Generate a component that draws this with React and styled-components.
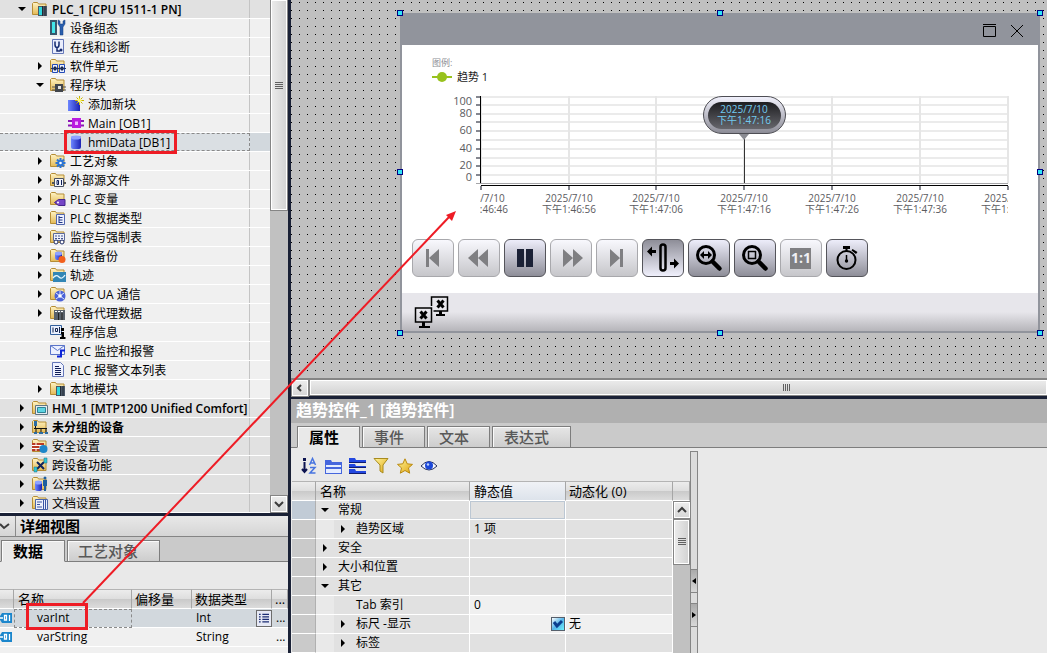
import React from 'react'
import styled, { createGlobalStyle, css } from 'styled-components'

const uiFont = '"Open Sans", "Noto Sans CJK SC", sans-serif'
const navy = '#1a2136'

const GlobalStyle = createGlobalStyle`
  * {
    box-sizing: border-box;
  }
  body {
    margin: 0;
    background: ${navy};
    font: 12px/18px ${uiFont};
    color: #000;
    overflow: hidden;
  }
  button {
    font: inherit;
    color: inherit;
    padding: 0;
    border: 0;
    background: none;
  }
  ul {
    list-style: none;
    margin: 0;
    padding: 0;
  }
  svg {
    display: block;
    flex: none;
  }
`

const Page = styled.div`
  position: relative;
  display: flex;
  gap: 3px;
  height: 100vh;
  overflow: hidden;
`

const LeftPane = styled.aside`
  display: flex;
  flex-direction: column;
  gap: 3px;
  width: 288px;
  flex: none;
`

const RightPane = styled.main`
  display: flex;
  flex-direction: column;
  gap: 3px;
  flex: 1;
  min-width: 0;
`

/* ---- project tree ---- */

const TreePanel = styled.section`
  display: flex;
`

const TreeList = styled.ul`
  flex: 1;
  background: #fff;
`

const TreeRow = styled.li`
  display: flex;
  height: 19px;
  border-bottom: 1px solid #fff;
  background: ${p => (p.$selected ? '#d2d8dd' : p.$level ? '#f0f0f0' : '#e1e1e1')};
`

const TreeCell = styled.div`
  display: flex;
  align-items: center;
  flex: 1;
  padding-left: ${p => 16 + p.$level * 18}px;
  border-right: 1px solid #c4c4c4;
  font-weight: ${p => (p.$bold ? 600 : 400)};
  white-space: nowrap;
  ${p =>
    p.$selected &&
    css`
      background: #dadfe3;
      border: 1px dashed #8a8a8a;
      border-left: 0;
    `}
`

const StatusCell = styled.div`
  width: 20px;
`

const Toggle = styled.button`
  display: flex;
  align-items: center;
  width: 16px;
  height: 16px;
  padding-left: 1px;
`

const TreeLabel = styled.span`
  margin-left: 4px;
  padding-top: 2px;
`

/* ---- scroll bars ---- */

const ScrollColumn = styled.div`
  display: flex;
  flex-direction: column;
  width: ${p => p.$width}px;
  flex: ${p => (p.$fill ? 1 : 'none')};
  background: #c1c1c1;
`

const Thumb = styled.div`
  display: flex;
  align-items: center;
  justify-content: center;
  height: ${p => p.$height}px;
  border: 1px solid #858585;
  box-shadow: inset 0 0 0 1px #fff;
  background: linear-gradient(to right, #ececec, #d2d2d2);
`

/* The list is scrolled down a little, so the thumb's upper end is out of view */
const TreeThumb = styled(Thumb)`
  border-top: 0;
  padding-bottom: 38px;
`

const ScrollButton = styled.button`
  display: flex;
  align-items: center;
  justify-content: center;
  width: 18px;
  height: 18px;
  margin-top: ${p => (p.$end ? 'auto' : 0)};
  border: 1px solid #858585;
  box-shadow: inset 0 0 0 1px #fff;
  background: linear-gradient(#ededed, #d6d6d6);
`

const ScrollRow = styled.div`
  display: flex;
  height: 18px;
  border-top: 1px solid #858585;
`

const WideThumb = styled(Thumb)`
  flex: 1;
  height: 17px;
  justify-content: flex-start;
  padding-left: 62.5%;
  border-right: 0;
  background: linear-gradient(#ececec, #d2d2d2);
`

/* ---- tabs ---- */

const TabStrip = styled.div`
  display: flex;
  align-items: flex-end;
  gap: 2px;
  height: 25px;
  padding-left: ${p => p.$indent}px;
  background: linear-gradient(to top, #7d7d7d 1px, #cacaca 1px);
`

const Tab = styled.button`
  height: 22px;
  width: ${p => p.$width}px;
  padding-left: ${p => p.$inset}px;
  border: 1px solid #7d7d7d;
  border-bottom-color: ${p => (p.$active ? '#e9e9e9' : '#7d7d7d')};
  box-shadow: inset 1px 1px 0 #fafafa;
  background: ${p => (p.$active ? '#e9e9e9' : 'linear-gradient(#e6e6e6, #cdcdcd)')};
  color: ${p => (p.$active ? '#000' : '#585858')};
  font-size: 15px;
  font-weight: ${p => (p.$active ? 700 : 500)};
  line-height: 18px;
  text-align: left;
`

/* ---- detail view ---- */

const DetailPanel = styled.section`
  flex: 1;
  background: #f0f0f0;
`

const DetailTitle = styled.header`
  display: flex;
  align-items: center;
  height: 21px;
  border-bottom: 1px solid #858585;
  background: linear-gradient(#e8e8e8, #d5d5d5);
`

const CollapseButton = styled.button`
  display: flex;
  align-items: center;
  width: 16px;
  height: 20px;
  border-right: 1px solid #8a8a8a;
`

const DetailHeading = styled.h2`
  margin: 0 0 0 4px;
  font-size: 15px;
  line-height: 20px;
  font-weight: 700;
`

const Spacer = styled.div`
  height: 27px;
  background: #e9e9e9;
`

const Table = styled.table`
  table-layout: fixed;
  width: ${p => p.$width};
  border-collapse: separate;
  border-spacing: 0;
`

const headStyle = css`
  height: 20px;
  border-top: 1px solid #b4b4b4;
  border-bottom: 1px solid #fff;
  border-right: 1px solid #a6a6a6;
  background: linear-gradient(#ececec, #dedede 50%, #c9c9c9 50%, #dcdcdc);
`

const HeadCell = styled.th`
  ${headStyle}
  padding: 0 0 0 ${p => p.$inset || 3}px;
  font-size: 13px;
  line-height: 17px;
  font-weight: 400;
  text-align: left;
  white-space: nowrap;
  overflow: hidden;
  ${p => p.$tinted && 'background: linear-gradient(#f0f2f6, #dde3eb);'}
`

const DetailCell = styled.td`
  height: 19px;
  padding: 0 0 0 ${p => p.$inset || 0}px;
  border-bottom: 1px solid #fff;
  background: ${p => (p.$selected ? '#d2d8dd' : '#f0f0f0')};
  ${p => p.$focused && 'outline: 1px dashed #8a8a8a; outline-offset: -1px;'}
`

const TypeCell = styled.div`
  display: flex;
  align-items: center;
  justify-content: space-between;
  height: 18px;
`

const PickButton = styled.button`
  display: flex;
  align-items: center;
  justify-content: center;
  width: 16px;
  height: 17px;
  border: 1px solid #6d6d6d;
  background: #e6e9f5;
`

/* ---- screen editor ---- */

const Canvas = styled.section`
  padding: 13px 7px 45px 109px;
  background-color: #c0c0c0;
  background-image: conic-gradient(from 270deg at 1px 1px, #000 25%, transparent 0);
  background-size: 8px 8px;
  background-position: 0 2px;
`

const HmiWindow = styled.article`
  position: relative;
  border: solid #91949c;
  border-width: 0 2px 2px;
  border-radius: 4px;
  background: #fff;
`

const HmiTitle = styled.header`
  display: flex;
  align-items: center;
  justify-content: flex-end;
  gap: 13px;
  height: 32px;
  padding: 3px 14px 0 0;
  background: #91949c;
`

const Legend = styled.div`
  padding: 12px 0 0 30px;
  color: #8d8f96;
  font-size: 9px;
  line-height: 12px;
`

const LegendItem = styled.div`
  display: flex;
  align-items: center;
  gap: 5px;
  color: #222;
  font-size: 11px;
  line-height: 15px;
`

const ChartBox = styled.div`
  padding: 8px 0 19px 30px;
`

const ChartSvg = styled.svg`
  fill: #5a5a5e;
`

const HmiToolbar = styled.div`
  display: flex;
  gap: 4px;
  padding: 0 10px 16px;
`

const looks = {
  off: { face: '#f8f8fd, #c6c6ca', edge: '#a8a8ac' },
  on: { face: '#ededfa, #8e8e98', edge: '#55555b' },
  pressed: { face: '#8e8e98, #f0f0fc', edge: '#55555b' },
}

const HmiButton = styled.button`
  display: flex;
  align-items: center;
  justify-content: center;
  width: 42px;
  height: 38px;
  border: 1px solid ${p => looks[p.$look].edge};
  border-radius: 6px;
  background: linear-gradient(${p => looks[p.$look].face});
`

const HmiFooter = styled.footer`
  height: 38px;
  padding: 3px 0 0 12px;
  background: linear-gradient(#e7e6eb 50%, #b6b5ba);
`

const Handle = styled.span`
  position: absolute;
  left: ${p => p.$x};
  top: ${p => p.$y};
  width: 6px;
  height: 6px;
  margin: -3px;
  border: 1px solid #000080;
  background: #31e4f4;
`

/* ---- inspector ---- */

const Inspector = styled.section`
  display: flex;
  flex-direction: column;
  flex: 1;
  min-height: 0;
  background: #e9e9e9;
`

const InspectorTitle = styled.h2`
  flex: none;
  height: 24px;
  margin: 0;
  padding-left: 5px;
  background: #b0b0b0;
  color: #fff;
  font-size: 16px;
  line-height: 23px;
  font-weight: 600;
`

const InspectorBody = styled.div`
  display: flex;
  flex: 1;
  min-height: 0;
`

const PropertyPane = styled.div`
  display: flex;
  flex-direction: column;
  width: 399px;
`

const IconBar = styled.div`
  display: flex;
  align-items: center;
  gap: 8px;
  flex: none;
  height: 33px;
  padding: 2px 0 0 10px;
`

const PropertyArea = styled.div`
  display: flex;
  flex: 1;
  padding-left: 1px;
`

const PropertyTable = styled(Table)`
  flex: none;
  align-self: flex-start;
`

const SideColumn = styled.div`
  display: flex;
  flex-direction: column;
  flex: 1;
`

const HeadStub = styled.div`
  ${headStyle}
`

const PropCell = styled.td`
  height: 19px;
  padding: 0 0 0 ${p => p.$inset || 0}px;
  border-bottom: 1px solid #fff;
  border-right: 1px solid ${p => (p.$gutter ? '#b0b0b0' : '#fff')};
  background: ${p => p.$bg || '#e1e1e1'};
  ${p => p.$focused && 'box-shadow: inset 0 0 0 1px #bcc7d3;'}
`

const PropName = styled.div`
  display: flex;
  align-items: center;
  height: 18px;
  padding-left: ${p => (p.$level ? 18 : 0)}px;
  background: ${p => (p.$level ? 'linear-gradient(to right, #e9e9e9 18px, transparent 18px)' : 'none')};
`

const PropToggle = styled.button`
  display: flex;
  align-items: center;
  width: 22px;
  height: 16px;
  padding-left: 4px;
`

const CheckBox = styled.label`
  display: grid;
  width: 14px;
  margin-left: auto;

  > * {
    grid-area: 1 / 1;
  }
`

const CheckInput = styled.input`
  appearance: none;
  width: 14px;
  height: 14px;
  margin: 0;
  border: 1px solid #56606c;
  background: linear-gradient(135deg, #fff, #55b5ea 50%, #6ff0fa);

  &:not(:checked) + svg {
    visibility: hidden;
  }
`

const Splitter = styled.div`
  display: flex;
  flex-direction: column;
  gap: 10px;
  width: 8px;
  margin-top: 3px;
  padding-top: 117px;
  border: 1px solid #858585;
  border-bottom: 0;
  background: #dcdcdc;
`

const SplitButton = styled.button`
  display: flex;
  align-items: center;
  justify-content: center;
  height: 24px;
  border: solid #858585;
  border-width: 1px 0;
  background: linear-gradient(#aaa, #d8d8d8);
`

const Annotation = styled.svg`
  position: absolute;
  left: 0;
  top: 0;
  pointer-events: none;
`

/* ---- icons ---- */

const Arrow = ({ open }) => (
  <svg width="10" height="10">
    <path d={open ? 'M1 3h8L5 7z' : 'M3 1v8l4-4z'} />
  </svg>
)

const Chevron = ({ d }) => (
  <svg width="12" height="12">
    <path d={d} fill="none" stroke="#3c3c3c" strokeWidth="2" />
  </svg>
)

const Grip = ({ vertical }) => (
  <svg width="8" height="8">
    <path
      d={vertical ? 'M.5 0v7M2.5 0v7M4.5 0v7M6.5 0v7' : 'M0 .5h8M0 2.5h8M0 4.5h8M0 6.5h8'}
      stroke="#606060"
      fill="none"
    />
  </svg>
)

const Folder = () => (
  <path d="M.5 13.5V2.500l1-1h4l1 1.500h7.500V13.500z" fill="url(#gold)" stroke="#b58d35" />
)

const Cylinder = ({ x, y, w, h }) => (
  <g>
    <rect x={x} y={y} width={w} height={h} rx="2" fill="url(#blue)" />
    <ellipse cx={x + w / 2} cy={y + 1.5} rx={w / 2} ry="2" fill="#8ea2ff" />
  </g>
)

const Rack = () => (
  <g>
    <path d="M6 5h9v10H6z" fill="#4b5867" />
    <path d="M7 6h3v8H7z" fill="#2fd6dc" />
    <path d="M10.500 5v10M13 5v10" stroke="#222b36" />
  </g>
)

const drawings = {
  plc: <><Folder /><Rack /></>,
  config: (
    <>
      <path d="M0 0h7v15H0z" fill="#39586c" />
      <path d="M2 2h3v11H2z" fill="#43e6ea" />
      <path d="M8 0v4l2 3v8h3V7l2-3V0l-2 1v3h-3V1z" fill="#2a5fae" stroke="#173e7d" strokeWidth=".5" />
    </>
  ),
  diag: (
    <>
      <path d="M2.500.5h11v14h-11z" fill="#e9edfc" stroke="#6577b8" />
      <path d="M5 2.500v3q0 3 2 3t2-3v-3M7 9v3h3" fill="none" stroke="#142a6e" strokeWidth="1.500" />
      <circle cx="11" cy="11" r="1.500" fill="#142a6e" />
    </>
  ),
  units: (
    <>
      <Folder />
      <path d="M2.500 6.500h5v8h-5zM9.500 6.500h5v8h-5z" fill="#e9efff" stroke="#234bb8" />
      <path d="M1 10.500h15M4 9h2v3H4zM11 9h2v3h-2z" stroke="#22345f" />
    </>
  ),
  blocks: (
    <>
      <Folder />
      <path d="M2 10h14M2 13h14" stroke="#555" />
      <path d="M5 7h8v8H5z" fill="#42464c" />
      <path d="M8 9h3v3H8z" fill="#e4e4e4" />
    </>
  ),
  add: (
    <>
      <path d="M0 4h12v11H0z" fill="url(#blue)" />
      <path d="M11.500 0v9M7 4.500h9M8.500 1.500l6 6M14.500 1.500l-6 6" stroke="#c9b500" />
      <circle cx="11.500" cy="4.500" r="2" fill="#fff86b" />
    </>
  ),
  main: (
    <>
      <path d="M0 6h16M0 10.500h16" stroke="#8b16b5" strokeWidth="2" />
      <path d="M4 3h9v10H4z" fill="#b91be0" />
      <path d="M7 6.500h3v3.500H7z" fill="#f0b9ff" />
    </>
  ),
  db: <Cylinder x={3} y={2} w={10} h={13} />,
  tech: (
    <>
      <Folder />
      <path d="M10.500 5v10M5.500 10h10M7 6.500l7 7M14 6.500l-7 7" stroke="#2a74d6" strokeWidth="2" />
      <circle cx="10.500" cy="10" r="3" fill="#2a74d6" />
      <circle cx="10.500" cy="10" r="1.300" fill="#fff" />
    </>
  ),
  source: (
    <>
      <Folder />
      <path d="M2 11h14" stroke="#555" strokeWidth="2" />
      <path d="M4.500 6.500h9v8h-9z" fill="#f3f5fa" stroke="#4a5263" />
      <path d="M7 8.500h1.500v4H7zM11.500 8v5" fill="none" stroke="#10205a" />
    </>
  ),
  tags: (
    <>
      <Folder />
      <path d="M4.500 11.500l4-3h6.500v6H8.500z" fill="#7546c7" stroke="#44248c" />
      <circle cx="8" cy="11.500" r="1" fill="#fff" />
    </>
  ),
  types: (
    <>
      <Folder />
      <path d="M6.500 4.500h8v10h-8z" fill="#eef1ff" stroke="#5266ad" />
      <path d="M9 6v7M9 7.500h3.500M9 10h3.500M9 12.500h3.500" fill="none" stroke="#1f3686" />
    </>
  ),
  watch: (
    <>
      <Folder />
      <path d="M3.500 4.500h11v7h-11z" fill="#edf0fb" stroke="#5c6a9b" />
      <path d="M5 7h8M5 9.500h8" stroke="#44548f" strokeDasharray="2 1" />
      <circle cx="6" cy="13" r="2" fill="#fff" stroke="#1d2b66" />
      <circle cx="12" cy="13" r="2" fill="#fff" stroke="#1d2b66" />
    </>
  ),
  backup: (
    <>
      <Folder />
      <Cylinder x={5} y={4} w={7} h={8} />
      <circle cx="12" cy="11.500" r="3.500" fill="#f2601d" />
    </>
  ),
  trace: (
    <>
      <Folder />
      <path d="M3 5h13v10H3z" fill="#3286b5" />
      <path d="M3 11q3-4 6-1t6-2" fill="none" stroke="#e6f7ff" strokeWidth="1.300" />
    </>
  ),
  opc: (
    <>
      <Folder />
      <circle cx="10" cy="10" r="5.500" fill="#4a62d8" />
      <path d="M6 7l8 6M14 7l-8 6M10 5v4" stroke="#dfe6ff" />
      <circle cx="10" cy="10" r="1.800" fill="#fff" />
    </>
  ),
  proxy: (
    <>
      <Folder />
      <path d="M4 5h11v10H4z" fill="#59616b" />
      <path d="M5 6.500h9" stroke="#fff" strokeDasharray="2 1" />
      <path d="M8.500 8v7M12 8v7" stroke="#222" />
    </>
  ),
  info: (
    <>
      <path d="M.5 1.500h11v9H.5z" fill="#eaf1ff" stroke="#33609d" />
      <path d="M3 3.500v5M5.500 4.500h2v3h-2zM9.500 3v6" fill="none" stroke="#15254d" />
      <path d="M11 8h3v5h1.500v2H10v-2h1.500v-3H11zM11 4h3v3h-3z" />
    </>
  ),
  alarm: (
    <>
      <path d="M.5 2.500h14v9H.5z" fill="#edf1ff" stroke="#5b75c9" />
      <path d="M.5 2.500l7 5 7-5" fill="none" stroke="#5b75c9" />
      <path d="M15 7.500h-4v6H7" fill="none" stroke="#0b22d8" strokeWidth="2" />
    </>
  ),
  textlist: (
    <>
      <path d="M2.500.5h8l3 3v11h-11z" fill="#eff2ff" stroke="#6577b8" />
      <path d="M5 4.500h4M5 6.500h6M5 8.500h6M5 10.500h6M5 12.500h6" stroke="#111f57" />
    </>
  ),
  local: <><Folder /><Rack /></>,
  hmi: (
    <>
      <Folder />
      <path d="M3.500 5.500h12v9h-12z" fill="#e6edf2" stroke="#5f7482" />
      <path d="M5.500 7.500h8v5h-8z" fill="#5ed4e2" stroke="#2e8394" />
    </>
  ),
  ungrouped: (
    <>
      <Folder />
      <path d="M3.500 5v5M2 9.500h13M4 10v4M9 10v4M14 9v5" stroke="#111" />
      <path d="M2 2h3v5H2zM2 13h3v2H2zM7 13h4v2H7zM13 13h3v2h-3z" fill="#2d6da3" />
    </>
  ),
  security: (
    <>
      <Folder />
      <path d="M0 5h12v8H0z" fill="#b93a24" />
      <path d="M0 7.500h12M0 10.500h12M4 5v3M8 7.500v3M4 10.500V13" stroke="#fff" />
      <circle cx="11.500" cy="11" r="4" fill="#1e86c9" />
    </>
  ),
  cross: (
    <>
      <Folder />
      <path d="M5 5l7 7M12 5l-7 7" stroke="#10245c" strokeWidth="2" />
      <path d="M12 1h3v5h-3zM2 10h3v5H2z" fill="#2fc8d6" stroke="#1d6d80" strokeWidth=".5" />
    </>
  ),
  common: (
    <>
      <Folder />
      <Cylinder x={3} y={5} w={7} h={10} />
      <path d="M11 4h4v6h-1v5h-2v-5h-1z" fill="#1f5f9e" />
      <circle cx="13" cy="2" r="1.500" fill="#1f5f9e" />
    </>
  ),
  docs: (
    <>
      <Folder />
      <path d="M3.500 4.500h12v10h-12z" fill="#eef1fb" stroke="#4b64a8" />
      <path d="M5 7h5M5 9.500h3M5 12h5M11.500 5v9M13.500 5v9" stroke="#3a55a4" />
    </>
  ),
  sort: (
    <>
      <path d="M3.500 4v9M1 11l2.500 3L6 11" fill="none" stroke="#0c1350" strokeWidth="2" />
      <path d="M2 0h3v3H2z" fill="#0c1350" />
      <path d="M8.500 7L11.500.5l3 6.500M9.500 5h4M9 9.500h5L9 15h5.500" fill="none" stroke="#4774e0" strokeWidth="1.500" />
    </>
  ),
  group: (
    <>
      <path d="M0 2h6l1 2h10v12H0z" fill="#4566dd" />
      <path d="M1 7h15v2H1zM1 11h15v4H1z" fill="#e4ecff" />
    </>
  ),
  expand: (
    <>
      <path d="M0 0h6l1 2h10v2H0zM0 6h6l1 2h10v2H0zM0 11h6l1 2h10v3H0z" fill="#2348e0" />
      <path d="M0 4.500h17M0 9.500h17M0 15.500h17" stroke="#101c70" />
    </>
  ),
  filter: <path d="M1 .5h14L10 7v8l-3-2V7z" fill="url(#gold2)" stroke="#a88b1e" />,
  star: <path d="M8 .8l2.200 5 5.300.6-4 3.500 1.200 5.300L8 12.500l-4.700 2.700 1.200-5.300-4-3.500 5.300-.6z" fill="url(#gold2)" stroke="#ba8a10" />,
  eye: (
    <>
      <path d="M0 8q8-9 16 0-8 8-16 0z" fill="#f4f7ff" stroke="#27315c" />
      <circle cx="8" cy="7.500" r="4" fill="#1c48d8" />
      <circle cx="7" cy="6.500" r="1.200" fill="#bcd0ff" />
    </>
  ),
  tag: (
    <>
      <path d="M2 3h10v10H2l-3-5z" fill="#1b86cc" />
      <path d="M4.500 5.500h2v4.500h-2zM9.500 5v6M0 8h3" fill="none" stroke="#fff" strokeWidth="1.300" />
    </>
  ),
  list: <path d="M0 2.500h2M4 2.500h8M0 5.500h2M4 5.500h8M0 8.500h2M4 8.500h8M0 11.500h2M4 11.500h8" stroke="#1b2c73" strokeWidth="1.500" />,
}

const Icon = ({ name }) => (
  <svg width="16" height="16" overflow="visible">
    {drawings[name]}
  </svg>
)

const Lens = () => (
  <>
    <circle cx="13" cy="13" r="8.500" fill="none" stroke="#000" strokeWidth="3" />
    <path d="M19.500 19.500l7 7" stroke="#000" strokeWidth="4.500" strokeLinecap="round" />
  </>
)

const hmiIcons = {
  first: <path d="M9 7h3v18H9zM22 7v18L12 16z" fill="#7f7f82" />,
  back: <path d="M15 7v18L5 16zM25 7v18L15 16z" fill="#7f7f82" />,
  pause: <path d="M8 7h7v18H8zM17 7h7v18h-7z" fill="#1b2136" />,
  forward: <path d="M8 7v18l10-9zM18 7v18l10-9z" fill="#7f7f82" />,
  last: <path d="M9 7v18l10-9zM19 7h3v18h-3z" fill="#7f7f82" />,
  ruler: (
    <>
      <rect x="13.500" y="2.500" width="5" height="26" rx="2.500" fill="none" stroke="#000" strokeWidth="2.500" />
      <path d="M0 9.500l5-5v3.500h4v3H5v3.500zM32 21.500l-5-5V20h-4v3h4v3.500z" />
    </>
  ),
  zoomTime: (
    <>
      <Lens />
      <path d="M7 13l4-4v3h4V9l4 4-4 4v-3h-4v3z" />
    </>
  ),
  zoomArea: (
    <>
      <Lens />
      <path d="M9.500 9.500h7v7h-7z" fill="none" stroke="#000" strokeWidth="1.500" />
    </>
  ),
  original: (
    <>
      <path d="M5 6h21v21H5z" fill="#808083" />
      <text x="16" y="21" textAnchor="middle" fontSize="14" fontWeight="700" fill="#f0f0f4">
        1:1
      </text>
    </>
  ),
  timer: (
    <>
      <circle cx="15.500" cy="18" r="9" fill="none" stroke="#000" strokeWidth="2" />
      <path d="M12 4h7v3h-7zM14.500 7h2v3h-2zM21.500 7l5 3-1.500 2-4.500-3.500z" />
      <path d="M15.500 13v6" stroke="#000" strokeWidth="1.500" />
      <circle cx="15.500" cy="19" r="1.700" />
    </>
  ),
}

/* ---- data ---- */

const tree = [
  { level: 0, icon: 'plc', label: 'PLC_1 [CPU 1511-1 PN]', open: true, bold: true },
  { level: 1, icon: 'config', label: '设备组态', leaf: true },
  { level: 1, icon: 'diag', label: '在线和诊断', leaf: true },
  { level: 1, icon: 'units', label: '软件单元' },
  { level: 1, icon: 'blocks', label: '程序块', open: true },
  { level: 2, icon: 'add', label: '添加新块', leaf: true },
  { level: 2, icon: 'main', label: 'Main [OB1]', leaf: true },
  { level: 2, icon: 'db', label: 'hmiData [DB1]', leaf: true, selected: true },
  { level: 1, icon: 'tech', label: '工艺对象' },
  { level: 1, icon: 'source', label: '外部源文件' },
  { level: 1, icon: 'tags', label: 'PLC 变量' },
  { level: 1, icon: 'types', label: 'PLC 数据类型' },
  { level: 1, icon: 'watch', label: '监控与强制表' },
  { level: 1, icon: 'backup', label: '在线备份' },
  { level: 1, icon: 'trace', label: '轨迹' },
  { level: 1, icon: 'opc', label: 'OPC UA 通信' },
  { level: 1, icon: 'proxy', label: '设备代理数据' },
  { level: 1, icon: 'info', label: '程序信息', leaf: true },
  { level: 1, icon: 'alarm', label: 'PLC 监控和报警', leaf: true },
  { level: 1, icon: 'textlist', label: 'PLC 报警文本列表', leaf: true },
  { level: 1, icon: 'local', label: '本地模块' },
  { level: 0, icon: 'hmi', label: 'HMI_1 [MTP1200 Unified Comfort]', bold: true },
  { level: 0, icon: 'ungrouped', label: '未分组的设备', bold: true },
  { level: 0, icon: 'security', label: '安全设置' },
  { level: 0, icon: 'cross', label: '跨设备功能' },
  { level: 0, icon: 'common', label: '公共数据' },
  { level: 0, icon: 'docs', label: '文档设置' },
]

const properties = [
  { level: 0, label: '常规', open: true, focused: true },
  { level: 1, label: '趋势区域', value: '1 项' },
  { level: 0, label: '安全' },
  { level: 0, label: '大小和位置' },
  { level: 0, label: '其它', open: true },
  { level: 1, label: 'Tab 索引', value: '0', leaf: true, editable: true },
  { level: 1, label: '标尺 -显示', check: true, editable: true, dynamic: '无' },
  { level: 1, label: '标签' },
]

const hmiButtons = [
  { icon: 'first', look: 'off', label: '第一个' },
  { icon: 'back', look: 'off', label: '后退' },
  { icon: 'pause', look: 'on', label: '暂停' },
  { icon: 'forward', look: 'off', label: '前进' },
  { icon: 'last', look: 'off', label: '最后一个' },
  { icon: 'ruler', look: 'pressed', label: '标尺' },
  { icon: 'zoomTime', look: 'on', label: '缩放时间轴' },
  { icon: 'zoomArea', look: 'on', label: '缩放区域' },
  { icon: 'original', look: 'off', label: '原始视图' },
  { icon: 'timer', look: 'on', label: '时间范围' },
]

const farEdge = 'calc(100% + 2px)'
const handles = [
  ['-2px', '0'], ['50%', '0'], [farEdge, '0'],
  ['-2px', '50%'], [farEdge, '50%'],
  ['-2px', farEdge], ['50%', farEdge], [farEdge, farEdge],
]

const gridY = [4, 12, 21, 29, 38, 47, 56, 65, 73, 82]
const yLabels = [['100', 13], ['80', 25], ['60', 42], ['40', 60], ['20', 77], ['0', 89]]
const xLabels = [
  ['1:46:46', 49], ['1:46:56', 137], ['1:47:06', 224], ['1:47:16', 312],
  ['1:47:26', 400], ['1:47:36', 488], ['1:47:46', 576],
]

/* ---- parts ---- */

const ProjectTree = () => (
  <TreePanel>
    <TreeList>
      {tree.map(item => (
        <TreeRow key={item.label} $level={item.level} $selected={item.selected}>
          <TreeCell $level={item.level} $bold={item.bold} $selected={item.selected}>
            <Toggle aria-label={item.label}>{!item.leaf && <Arrow open={item.open} />}</Toggle>
            <Icon name={item.icon} />
            <TreeLabel>{item.label}</TreeLabel>
          </TreeCell>
          <StatusCell />
        </TreeRow>
      ))}
    </TreeList>
    <ScrollColumn $width={18}>
      <TreeThumb $height={211}>
        <Grip />
      </TreeThumb>
      <ScrollButton $end aria-label="向下滚动">
        <Chevron d="M2 4l4 4 4-4" />
      </ScrollButton>
    </ScrollColumn>
  </TreePanel>
)

const DetailView = () => (
  <DetailPanel>
    <DetailTitle>
      <CollapseButton aria-label="折叠">
        <Chevron d="M0 4l4 4 5-4" />
      </CollapseButton>
      <DetailHeading>详细视图</DetailHeading>
    </DetailTitle>
    <TabStrip $indent={1}>
      <Tab $active $width={64} $inset={11}>数据</Tab>
      <Tab $width={93} $inset={10}>工艺对象</Tab>
    </TabStrip>
    <Spacer />
    <Table $width="100%">
      <colgroup>
        <col width="14" />
        <col width="118" />
        <col width="60" />
        <col width="80" />
        <col />
      </colgroup>
      <thead>
        <tr>
          <HeadCell />
          <HeadCell $inset={4}>名称</HeadCell>
          <HeadCell>偏移量</HeadCell>
          <HeadCell>数据类型</HeadCell>
          <HeadCell>...</HeadCell>
        </tr>
      </thead>
      <tbody>
        {[['varInt', 'Int'], ['varString', 'String']].map(([name, type], i) => (
          <tr key={name}>
            <DetailCell $selected={i === 0}>
              <Icon name="tag" />
            </DetailCell>
            <DetailCell $selected={i === 0} $focused={i === 0} $inset={23}>{name}</DetailCell>
            <DetailCell $selected={i === 0} />
            <DetailCell $selected={i === 0} $inset={4}>
              <TypeCell>
                {type}
                {i === 0 && (
                  <PickButton aria-label="选择类型">
                    <svg width="10" height="12" viewBox="0 0 12 14">{drawings.list}</svg>
                  </PickButton>
                )}
              </TypeCell>
            </DetailCell>
            <DetailCell $selected={i === 0} $inset={4}>...</DetailCell>
          </tr>
        ))}
      </tbody>
    </Table>
  </DetailPanel>
)

const TrendChart = () => (
  <ChartSvg width="578" height="128">
    <clipPath id="timeAxis">
      <path d="M48 92h528v36H48z" />
    </clipPath>
    {gridY.map(y => (
      <g key={y}>
        <path d={`M50 ${y + 1}h526`} stroke="#ebebeb" strokeWidth="2" />
        <path d={`M44 ${y + 1}h4`} stroke="#85878f" strokeWidth="2" />
      </g>
    ))}
    {xLabels.map(([, x]) => (
      <g key={x}>
        <path d={`M${x} 4v87`} stroke="#e6e6e6" strokeWidth="2" />
        <path d={`M${x} 94v4`} stroke="#85878f" strokeWidth="2" />
      </g>
    ))}
    <path d="M48.500 4v88" stroke="#000" />
    <path d="M44 91.500h532" stroke="#a5a5a8" />
    <path d="M49 93.500h527" stroke="#000" />
    {yLabels.map(([text, y]) => (
      <text key={text} x="40" y={y} fontSize="11" textAnchor="end">{text}</text>
    ))}
    <g clipPath="url(#timeAxis)" fontSize="10" textAnchor="middle">
      {xLabels.map(([text, x]) => (
        <g key={x}>
          <text x={x} y="110">2025/7/10</text>
          <text x={x} y="121">下午{text}</text>
        </g>
      ))}
    </g>
    <path d="M312.500 46v45" stroke="#333" />
    <path d="M307 42h10l-5 6z" fill="#8a8b92" />
    <rect x="271.500" y="4.500" width="82" height="37" rx="18.500" fill="url(#ring)" stroke="#4e4e54" />
    <rect x="276" y="10" width="73" height="27" rx="13.500" fill="url(#face)" />
    <g fontSize="10" fill="#72cbf0" textAnchor="middle">
      <text x="312" y="21">2025/7/10</text>
      <text x="312" y="32">下午1:47:16</text>
    </g>
  </ChartSvg>
)

const TrendControl = () => (
  <HmiWindow>
    <HmiTitle>
      <button aria-label="最大化">
        <svg width="14" height="14">
          <path d="M0 .5h13M.5 2.500h12v10H.5z" fill="none" stroke="#000" />
        </svg>
      </button>
      <button aria-label="关闭">
        <svg width="14" height="14">
          <path d="M1 1l12 12M13 1L1 13" stroke="#000" />
        </svg>
      </button>
    </HmiTitle>
    <Legend>
      图例:
      <LegendItem>
        <svg width="20" height="12">
          <path d="M0 6h20" stroke="#98c21d" strokeWidth="2" />
          <circle cx="10" cy="6" r="5" fill="#98c21d" />
        </svg>
        趋势 1
      </LegendItem>
    </Legend>
    <ChartBox>
      <TrendChart />
    </ChartBox>
    <HmiToolbar>
      {hmiButtons.map(({ icon, look, label }) => (
        <HmiButton key={icon} $look={look} disabled={look === 'off'} aria-label={label}>
          <svg width="32" height="32">{hmiIcons[icon]}</svg>
        </HmiButton>
      ))}
    </HmiToolbar>
    <HmiFooter>
      <svg width="36" height="34">
        <g fill="none" stroke="#000" strokeWidth="1.500">
          <path d="M17.500 10V1h16v14H19.500M1.500 12h16v14h-16z" />
          <path d="M22 19h9M5 31h11" strokeWidth="2" />
          <path d="M26.500 15v4M9.500 26v5" strokeWidth="3" />
          <path d="M23.500 4.500l6 7M29.500 4.500l-6 7M6.500 15.500l6 7M12.500 15.500l-6 7" strokeWidth="3" />
        </g>
      </svg>
    </HmiFooter>
    {handles.map(([x, y]) => (
      <Handle key={x + y} $x={x} $y={y} />
    ))}
  </HmiWindow>
)

const ScreenEditor = () => (
  <div>
    <Canvas>
      <TrendControl />
    </Canvas>
    <ScrollRow>
      <ScrollButton aria-label="向左滚动">
        <Chevron d="M7 3L4 6l3 3" />
      </ScrollButton>
      <WideThumb>
        <Grip vertical />
      </WideThumb>
    </ScrollRow>
  </div>
)

const Check = ({ label }) => (
  <CheckBox>
    <CheckInput type="checkbox" defaultChecked aria-label={label} />
    <svg width="14" height="14">
      <path d="M3 5l3 4 5-5" fill="none" stroke="#0b3f8f" strokeWidth="3" />
    </svg>
  </CheckBox>
)

const PropertyGrid = () => (
  <PropertyArea>
    <PropertyTable $width="381px">
      <colgroup>
        <col width="24" />
        <col width="154" />
        <col width="96" />
        <col width="107" />
      </colgroup>
      <thead>
        <tr>
          <HeadCell />
          <HeadCell $inset={4}>名称</HeadCell>
          <HeadCell $inset={4} $tinted>静态值</HeadCell>
          <HeadCell>动态化 (0)</HeadCell>
        </tr>
      </thead>
      <tbody>
        {properties.map(row => (
          <tr key={row.label}>
            <PropCell $gutter $bg={row.focused ? '#c1cbd6' : '#cacaca'} />
            <PropCell>
              <PropName $level={row.level}>
                <PropToggle aria-label={row.label}>{!row.leaf && <Arrow open={row.open} />}</PropToggle>
                {row.label}
              </PropName>
            </PropCell>
            <PropCell $inset={4} $bg={row.editable && '#f0f0f0'} $focused={row.focused}>
              {row.check ? <Check label={row.label} /> : row.value}
            </PropCell>
            <PropCell $inset={3} $bg={row.dynamic && '#f0f0f0'}>{row.dynamic}</PropCell>
          </tr>
        ))}
      </tbody>
    </PropertyTable>
    <SideColumn>
      <HeadStub />
      <ScrollColumn $width={17} $fill>
        <ScrollButton aria-label="向上滚动">
          <Chevron d="M2 8l4-4 4 4" />
        </ScrollButton>
        <Thumb $height={46}>
          <Grip />
        </Thumb>
      </ScrollColumn>
    </SideColumn>
  </PropertyArea>
)

const PropertyInspector = () => (
  <Inspector>
    <InspectorTitle>趋势控件_1 [趋势控件]</InspectorTitle>
    <TabStrip $indent={6}>
      <Tab $active $width={63} $inset={11}>属性</Tab>
      <Tab $width={63} $inset={11}>事件</Tab>
      <Tab $width={63} $inset={11}>文本</Tab>
      <Tab $width={79} $inset={11}>表达式</Tab>
    </TabStrip>
    <InspectorBody>
      <PropertyPane>
        <IconBar>
          {['sort', 'group', 'expand', 'filter', 'star', 'eye'].map(name => (
            <button key={name} aria-label={name}>
              <Icon name={name} />
            </button>
          ))}
        </IconBar>
        <PropertyGrid />
      </PropertyPane>
      <Splitter>
        <SplitButton aria-label="向左展开">
          <svg width="4" height="6"><path d="M4 0v6L0 3z" /></svg>
        </SplitButton>
        <SplitButton aria-label="向右展开">
          <svg width="4" height="6"><path d="M0 0v6l4-3z" /></svg>
        </SplitButton>
      </Splitter>
    </InspectorBody>
  </Inspector>
)

const DragHint = () => (
  <Annotation width="460" height="640">
    <defs>
      <linearGradient id="gold" x2="0" y2="1">
        <stop stopColor="#fff3c4" />
        <stop offset="1" stopColor="#e3b955" />
      </linearGradient>
      <linearGradient id="gold2" x2="1" y2="1">
        <stop stopColor="#fff59a" />
        <stop offset="1" stopColor="#e0a410" />
      </linearGradient>
      <linearGradient id="blue">
        <stop stopColor="#6c86ff" />
        <stop offset="1" stopColor="#1c22b4" />
      </linearGradient>
      <linearGradient id="ring" x2="0" y2="1">
        <stop stopColor="#f2f2fd" />
        <stop offset="1" stopColor="#8b8b95" />
      </linearGradient>
      <linearGradient id="face" x2="0" y2="1">
        <stop stopColor="#1d1d20" />
        <stop offset="1" stopColor="#66666c" />
      </linearGradient>
    </defs>
    <g fill="none" stroke="#ee1c25">
      <path d="M65.500 131.500h110v21h-110zM27.500 604.500h59v24h-59z" strokeWidth="3" />
      <path d="M83 603L450 216" strokeWidth="2" />
    </g>
    <path d="M456 211l-4 10-6-6z" fill="#ee1c25" />
  </Annotation>
)

const App = () => (
  <Page>
    <GlobalStyle />
    <LeftPane>
      <ProjectTree />
      <DetailView />
    </LeftPane>
    <RightPane>
      <ScreenEditor />
      <PropertyInspector />
    </RightPane>
    <DragHint />
  </Page>
)

export default App
